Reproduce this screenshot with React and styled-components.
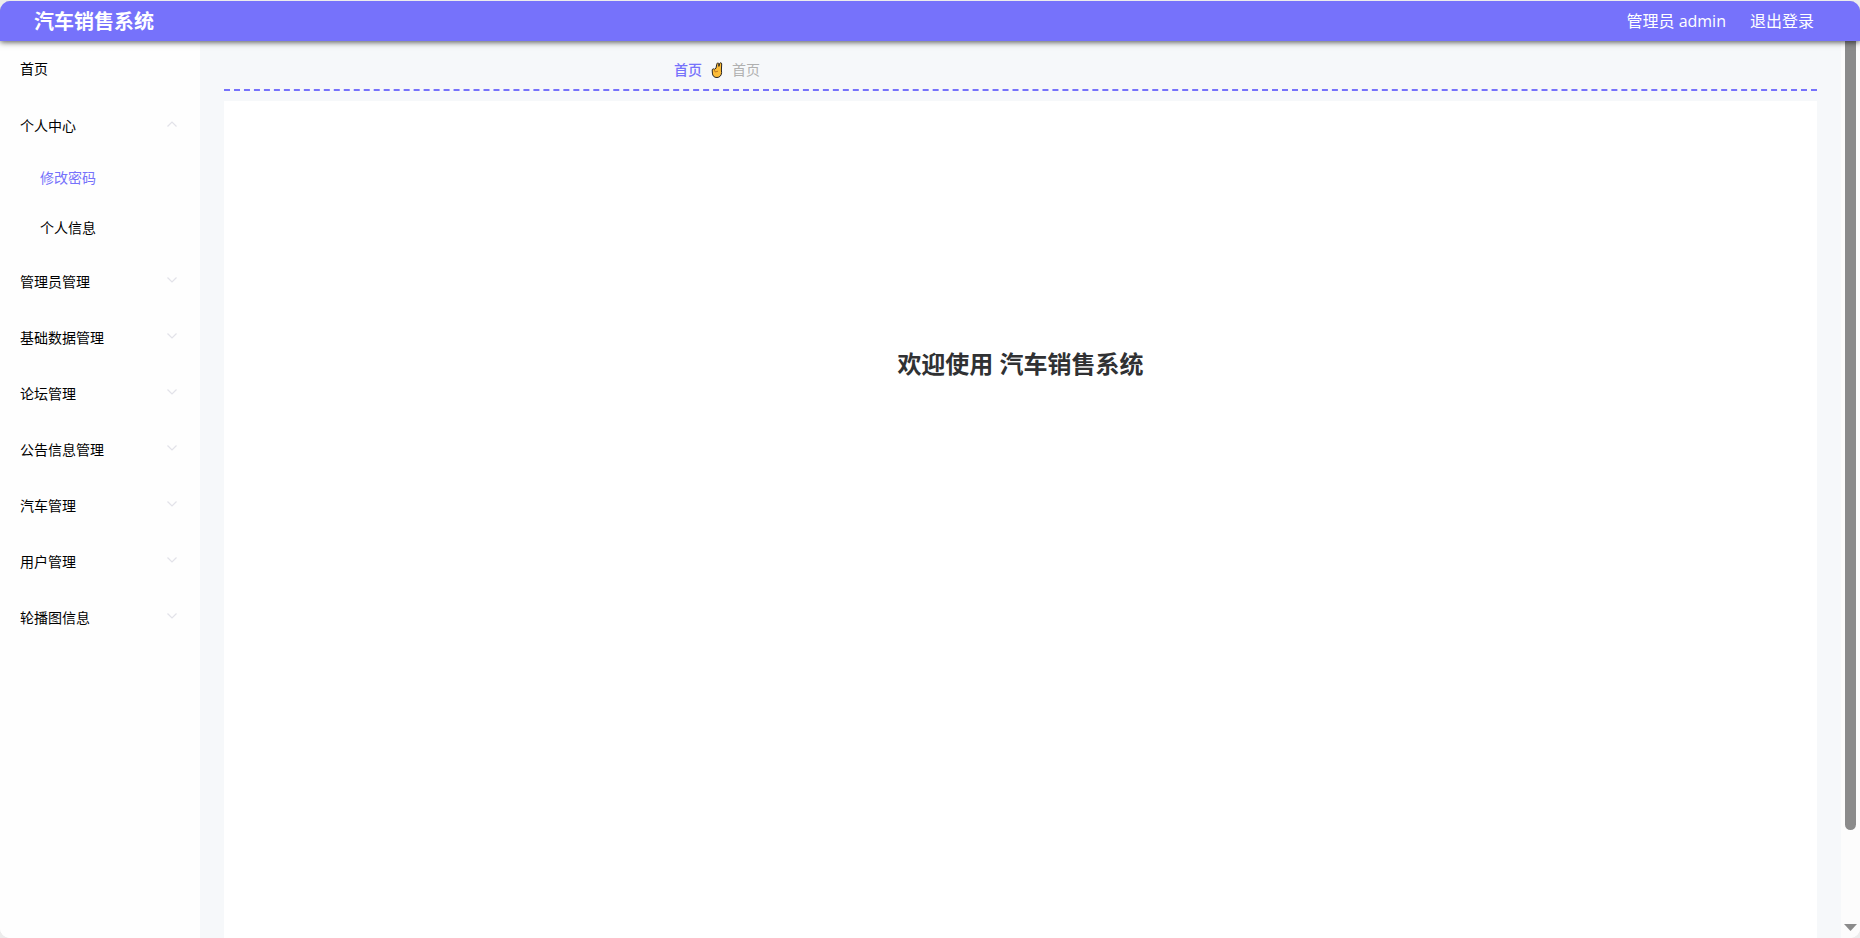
import React, { useState } from "react";
import styled, { createGlobalStyle } from "styled-components";

const GlobalStyle = createGlobalStyle`
  * { box-sizing: border-box; }
  body {
    margin: 0;
    background: #ececec;
    color: #000;
    font-family: "Open Sans", "Noto Sans CJK SC", sans-serif;
    font-size: 14px;
  }
  a { color: inherit; text-decoration: none; }
  button { font: inherit; color: inherit; background: none; border: 0; padding: 0; cursor: pointer; }
`;

const Page = styled.div`
  height: 100vh;
  padding-top: 1px;
  background: #ececec;
`;

const Frame = styled.div`
  display: flex;
  flex-direction: column;
  height: 100%;
  overflow: hidden;
  border-radius: 10px;
  background: #fff;
`;

const Header = styled.header`
  flex: none;
  z-index: 1;
  display: flex;
  align-items: flex-start;
  justify-content: space-between;
  height: 40px;
  padding: 0 46px 0 34px;
  background: #7672fb;
  color: #fff;
  box-shadow: 0 1px 6px rgba(0, 0, 0, 0.7);
`;

const Title = styled.h1`
  margin: 0;
  font-size: 20px;
  line-height: 42px;
  font-weight: 700;
`;

const Account = styled.div`
  display: flex;
  gap: 24px;
  font-size: 16px;
  line-height: 40px;
`;

const Body = styled.div`
  flex: 1;
  min-height: 0;
  display: flex;
`;

const Sidebar = styled.nav`
  flex: none;
  width: 200px;
  overflow: hidden;
  background: #fefefe;
`;

const HomeLink = styled.a`
  display: block;
  padding: 0 20px;
  line-height: 56px;
`;

const GroupButton = styled.button`
  display: flex;
  align-items: center;
  justify-content: space-between;
  width: 100%;
  height: 56px;
  padding: 2px 23px 0 20px;
  line-height: 54px;

  svg {
    margin-bottom: 4px;
    transform: ${(p) => (p.$open ? "rotate(180deg)" : "none")};
  }
`;

const SubLink = styled.a`
  display: block;
  padding: 0 40px;
  line-height: 50px;
  color: ${(p) => (p.$active ? "#7672fb" : "#000")};
`;

const Main = styled.main`
  flex: 1;
  min-width: 0;
  display: flex;
  flex-direction: column;
  padding: 8px 24px 0;
  background: #f6f8fa;
`;

const Breadcrumb = styled.nav`
  display: flex;
  align-items: center;
  gap: 9px;
  height: 42px;
  margin-bottom: 10px;
  padding: 2px 0 0 450px;
  border-bottom: 2px dashed #7672fb;
  line-height: 38px;
  color: #b0b0b0;

  a { color: #7672fb; font-weight: 500; }
`;

const Content = styled.section`
  flex: 1;
  padding-top: 246px;
  background: #fff;
  text-align: center;
`;

const Welcome = styled.h2`
  margin: 0;
  font-size: 24px;
  line-height: 34px;
  font-weight: 700;
  color: #303133;
`;

const Scrollbar = styled.div`
  flex: none;
  display: flex;
  flex-direction: column;
  align-items: center;
  justify-content: space-between;
  width: 19px;
  padding-bottom: 7px;
  background: #fcfcfc;
`;

const Thumb = styled.div`
  width: 11px;
  height: calc(100% - 101px);
  border-radius: 0 0 6px 6px;
  background: #8b8b8b;
`;

const Chevron = () => (
  <svg width="10" height="6" viewBox="0 0 10 6" fill="none" stroke="#e2e2e9" strokeWidth="1.2" aria-hidden="true">
    <path d="M0.5 0.5 5 5 9.5 0.5" />
  </svg>
);

const Hand = () => (
  <svg width="12" height="16" viewBox="0 0 12 16" stroke="#282420" strokeLinejoin="round" aria-hidden="true">
    <path
      d="M5 6.2 5.8 2.2C6 .6 7.8.6 7.8 2L7.9 4.4 8.6 1.6C9 .3 10.8.6 10.7 2L10.4 8l.2 2.6c-.2 3-1.8 4.8-4.6 4.9-3 .1-4.4-1.6-4.6-4.4L1.2 8c.2-1.3 1.4-1.5 2-.6Z"
      fill="#fdbd38"
    />
    <path d="M3.2 7.6 4.2 10l2.8-.8" fill="none" stroke="#b06a18" strokeWidth="0.8" />
  </svg>
);

const groups = [
  { name: "个人中心", items: ["修改密码", "个人信息"] },
  { name: "管理员管理" },
  { name: "基础数据管理" },
  { name: "论坛管理" },
  { name: "公告信息管理" },
  { name: "汽车管理" },
  { name: "用户管理" },
  { name: "轮播图信息" },
];

export default function App() {
  const [open, setOpen] = useState("个人中心");

  return (
    <Page>
      <GlobalStyle />
      <Frame>
        <Header>
          <Title>汽车销售系统</Title>
          <Account>
            <span>管理员 admin</span>
            <button type="button">退出登录</button>
          </Account>
        </Header>
        <Body>
          <Sidebar>
            <HomeLink href="#home">首页</HomeLink>
            {groups.map(({ name, items = [] }) => (
              <div key={name}>
                <GroupButton
                  type="button"
                  $open={open === name}
                  aria-expanded={open === name}
                  onClick={() => setOpen(open === name ? "" : name)}
                >
                  {name}
                  <Chevron />
                </GroupButton>
                {open === name &&
                  items.map((item, i) => (
                    <SubLink key={item} href="#center" $active={i === 0}>
                      {item}
                    </SubLink>
                  ))}
              </div>
            ))}
          </Sidebar>
          <Main>
            <Breadcrumb>
              <a href="#home">首页</a>
              <Hand />
              <span>首页</span>
            </Breadcrumb>
            <Content>
              <Welcome>欢迎使用 汽车销售系统</Welcome>
            </Content>
          </Main>
          <Scrollbar>
            <Thumb />
            <svg width="13" height="7" viewBox="0 0 13 7" aria-hidden="true">
              <path d="M0 0h13L6.5 7Z" fill="#8b8b8b" />
            </svg>
          </Scrollbar>
        </Body>
      </Frame>
    </Page>
  );
}
